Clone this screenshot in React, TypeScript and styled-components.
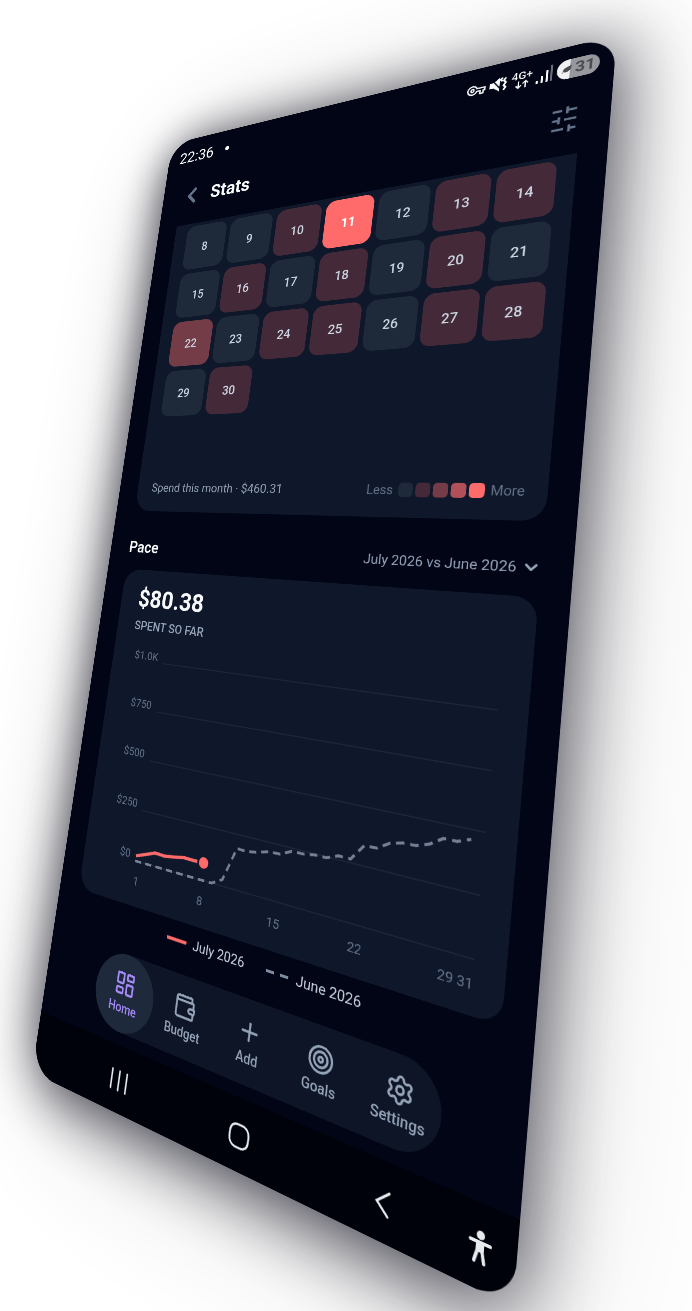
import React from 'react';
import styled, { createGlobalStyle } from 'styled-components';
import {
  ChevronDown,
  ChevronLeft,
  LayoutDashboard,
  Plus,
  Settings,
  Target,
  Wallet,
} from 'lucide-react';
import { MdOutlineVpnKey } from 'react-icons/md';

/* ---------- device geometry ---------- */

const SCREEN = { width: 768, height: 1664 };

type Point = [number, number];

/* Corners of the tilted device, measured from the device's own top centre. */
const CORNERS: Point[] = [
  [-174, 144],
  [271, 35],
  [167, 1307],
  [-314, 1072],
];

/* Projects the flat screen onto the four corners (TL, TR, BR, BL). */
function project(corners: Point[], w: number, h: number): string {
  const [[x0, y0], [x1, y1], [x2, y2], [x3, y3]] = corners.map(
    ([x, y]): Point => [x + w / 2, y],
  );
  const dx1 = x1 - x2;
  const dx2 = x3 - x2;
  const sx = x0 - x1 + x2 - x3;
  const dy1 = y1 - y2;
  const dy2 = y3 - y2;
  const sy = y0 - y1 + y2 - y3;
  const det = dx1 * dy2 - dx2 * dy1;
  const g = (sx * dy2 - dx2 * sy) / det;
  const k = (dx1 * sy - sx * dy1) / det;
  const m = [
    (x1 - x0 + g * x1) / w, (y1 - y0 + g * y1) / w, 0, g / w,
    (x3 - x0 + k * x3) / h, (y3 - y0 + k * y3) / h, 0, k / h,
    0, 0, 1, 0,
    x0, y0, 0, 1,
  ];
  return `matrix3d(${m.map((n) => n.toFixed(9)).join(',')})`;
}

/* ---------- palette ---------- */

const color = {
  page: '#020515',
  card: '#0f172a',
  cell: '#1e293b',
  coral: '#ff6b6b',
  text: '#f8fafc',
  soft: '#cbd5e1',
  muted: '#94a3b8',
  dim: '#64748b',
  violet: '#a78bfa',
};

const heat = ['#1e293a', '#442a39', '#743c47', '#b25059', '#ff6b6b'];

/* ---------- styled parts ---------- */

const GlobalStyle = createGlobalStyle`
  * { box-sizing: border-box; }
  body {
    margin: 0;
    background: #fff;
    font-family: Roboto, "Liberation Sans", sans-serif;
  }
  button {
    margin: 0;
    padding: 0;
    border: 0;
    background: none;
    color: inherit;
    font: inherit;
    cursor: pointer;
  }
  h1, h2, p, ol, ul { margin: 0; padding: 0; list-style: none; }
`;

const Stage = styled.main`
  display: flex;
  justify-content: center;
  align-items: flex-start;
  min-height: 100vh;
  overflow: hidden;
`;

const Phone = styled.div`
  flex: none;
  display: flex;
  flex-direction: column;
  width: ${SCREEN.width}px;
  height: ${SCREEN.height}px;
  margin-bottom: -360px;
  border-radius: 48px;
  background: ${color.page};
  color: ${color.text};
  transform: ${project(CORNERS, SCREEN.width, SCREEN.height)};
  transform-origin: 0 0;
  box-shadow: 0 12px 100px rgba(8, 8, 22, 0.8), 0 12px 220px rgba(8, 8, 18, 0.2);
`;

const StatusBar = styled.div`
  display: flex;
  align-items: center;
  height: 72px;
  padding: 0 20px 0 24px;
  font-size: 30px;
`;

const NoticeDot = styled.span`
  width: 8px;
  height: 8px;
  margin-left: 24px;
  border-radius: 50%;
  background: #fff;
`;

const StatusIcons = styled.div`
  display: flex;
  align-items: center;
  gap: 5px;
  margin-left: auto;
`;

const Network = styled.span`
  display: flex;
  flex-direction: column;
  align-items: center;
  font-size: 17px;
  font-weight: 500;
  line-height: 15px;
`;

const Battery = styled.span`
  display: flex;
  align-items: center;
  justify-content: center;
  gap: 4px;
  width: 58px;
  height: 31px;
  border-radius: 16px;
  background: linear-gradient(90deg, #f1f1f3 31%, #97989e 31%);
  color: #4a4b51;
  font-size: 24px;
  font-weight: 700;
`;

const Header = styled.header`
  display: flex;
  align-items: center;
  height: 102px;
  padding: 0 40px 12px;
  color: ${color.dim};
`;

const Title = styled.h1`
  margin: 0 auto 0 16px;
  color: ${color.text};
  font-size: 35px;
  font-weight: 700;
`;

const IconButton = styled.button`
  display: flex;
`;

const CalendarCard = styled.section`
  margin: 0 40px;
  padding: 6px 26px 28px;
  border-radius: 0 0 32px 32px;
  background: ${color.card};
`;

const MonthGrid = styled.ol`
  display: grid;
  grid-template-columns: repeat(7, 1fr);
  grid-template-rows: repeat(5, 84px);
  gap: 8px;
`;

const Day = styled.li<{ $level: number }>`
  display: flex;
  align-items: center;
  justify-content: center;
  border-radius: 16px;
  background: ${({ $level }) => heat[$level]};
  color: ${({ $level }) => ($level === 4 ? '#fff' : color.soft)};
  font-size: 22px;
  font-weight: ${({ $level }) => ($level === 4 ? 700 : 500)};
`;

const CardFooter = styled.div`
  display: flex;
  align-items: center;
  justify-content: space-between;
  height: 28px;
  margin-top: 24px;
  padding: 0 4px;
  color: ${color.muted};
  font-size: 21px;
`;

const Scale = styled.div`
  display: flex;
  align-items: center;
  gap: 4px;
  color: ${color.dim};
  font-size: 20px;
`;

const ScaleLabel = styled.span`
  margin: 0 4px;

  &:last-child { margin-right: 0; }
`;

const Swatch = styled.span<{ $level: number }>`
  width: 22px;
  height: 22px;
  border-radius: 6px;
  background: ${({ $level }) => heat[$level]};
`;

const SectionHead = styled.div`
  display: flex;
  align-items: center;
  justify-content: space-between;
  height: 40px;
  margin: 44px 40px 20px;
`;

const SectionTitle = styled.h2`
  font-size: 28px;
  font-weight: 600;
`;

const RangeButton = styled.button`
  display: flex;
  align-items: center;
  gap: 6px;
  color: ${color.muted};
  font-size: 21px;
`;

const PaceCard = styled.section`
  margin: 0 40px;
  padding: 24px 36px 20px;
  border-radius: 32px;
  background: ${color.card};
`;

const Amount = styled.p`
  font-size: 42px;
  font-weight: 700;
  line-height: 52px;
`;

const Caption = styled.p`
  margin: 8px 0 16px;
  color: ${color.muted};
  font-size: 21px;
  font-weight: 500;
  line-height: 24px;
`;

const Chart = styled.svg`
  display: block;
  width: 100%;
  height: auto;
  overflow: visible;
`;

const AxisText = styled.text`
  fill: ${color.dim};
  font-size: 19px;
`;

const Legend = styled.ul`
  display: flex;
  justify-content: center;
  gap: 36px;
  margin: 14px 0 32px;
  color: ${color.soft};
  font-size: 21px;
  line-height: 28px;
`;

const LegendItem = styled.li`
  display: flex;
  align-items: center;
  gap: 12px;
`;

const TabBar = styled.nav`
  display: grid;
  grid-template-columns: repeat(5, 1fr);
  align-self: center;
  width: 562px;
  height: 116px;
  border-radius: 58px;
  background: #0e1527;
`;

const Tab = styled.button<{ $active?: boolean }>`
  display: flex;
  flex-direction: column;
  align-items: center;
  justify-content: center;
  gap: 4px;
  border-radius: 50%;
  background: ${({ $active }) => ($active ? color.cell : 'none')};
  color: ${({ $active }) => ($active ? color.violet : color.muted)};
  font-size: 20px;
  font-weight: 500;
  line-height: 24px;
`;

const SystemBar = styled.nav`
  display: grid;
  grid-template-columns: repeat(3, 215px) 1fr;
  align-items: center;
  justify-items: center;
  height: 96px;
  margin-top: auto;
  padding: 4px 28px 0 64px;
  border-radius: 0 0 48px 48px;
  background: #00020b;
  color: #e8eaee;
`;

/* ---------- data ---------- */

const levels: Record<number, number> = {
  10: 1, 11: 4, 13: 1, 14: 1, 16: 1, 18: 1, 20: 1,
  22: 2, 24: 1, 25: 1, 27: 1, 28: 1, 30: 1,
};

const days = Array.from({ length: 23 }, (_, i) => i + 8);

const july = [25, 44, 64, 62, 70, 80, 79, 80.38];

const june = [
  0, 0, 0, 0, 0, 0, 0, 0, 0, 29, 186, 184, 194, 209, 211, 236, 237, 245, 246,
  267, 266, 336, 338, 371, 384, 386, 404, 440, 440, 460.31,
];

const plot = { left: 69, right: 612, top: 31, bottom: 351 };

const px = (day: number) =>
  plot.left + ((day - 1) * (plot.right - plot.left)) / 30;
const py = (value: number) =>
  plot.bottom - (value * (plot.bottom - plot.top)) / 1000;
const line = (values: number[]) =>
  values.map((v, i) => `${px(i + 1).toFixed(1)},${py(v).toFixed(1)}`).join(' ');

const yTicks: [number, string][] = [
  [1000, '$1.0K'],
  [750, '$750'],
  [500, '$500'],
  [250, '$250'],
  [0, '$0'],
];

const tabs = [
  { label: 'Home', Icon: LayoutDashboard },
  { label: 'Budget', Icon: Wallet },
  { label: 'Add', Icon: Plus },
  { label: 'Goals', Icon: Target },
  { label: 'Settings', Icon: Settings },
];

/* ---------- drawings ---------- */

const MutedVibrate = () => (
  <svg width="28" height="28" viewBox="0 0 28 28" aria-hidden="true">
    <path d="M1 9h6l9-7v23l-9-7H1z" fill="currentColor" />
    <path d="M1 0l18 23" stroke={color.page} strokeWidth="2" />
    <path
      d="M20 3l-3 3 3 3M25 4l-3 4 3 4-3 4 3 4-3 4"
      fill="none"
      stroke="currentColor"
      strokeWidth="3"
    />
  </svg>
);

const DataArrows = () => (
  <svg width="24" height="14" viewBox="0 0 24 14" aria-hidden="true">
    <path
      d="M7 1v11M3 8l4 4 4-4M17 13V2M13 6l4-4 4 4"
      fill="none"
      stroke="currentColor"
      strokeWidth="2"
    />
  </svg>
);

const Signal = () => (
  <svg width="24" height="28" viewBox="0 0 24 28" aria-hidden="true">
    <path d="M0 22h3v5H0zM7 16h3v11H7zM14 8h3v19h-3z" fill="currentColor" />
    <path d="M20 1h3v26h-3z" fill="#6b6d78" />
  </svg>
);

const Leaf = () => (
  <svg width="15" height="15" viewBox="0 0 18 18" aria-hidden="true">
    <path
      d="M1 15c2-1 2-2 2-4 0-5 6-6 14-9-1 9-4 12-9 12-1 0-3 0-4-1l-2 3z"
      fill="currentColor"
    />
  </svg>
);

const Sliders = () => (
  <svg
    width="44"
    height="44"
    viewBox="0 0 24 24"
    fill="none"
    stroke="currentColor"
    strokeWidth="2"
    aria-hidden="true"
  >
    <path d="M21 4h-7M10 4H3M21 12h-9M8 12H3M21 20h-5M12 20H3M14 1v6M8 9v6M16 17v6" />
  </svg>
);

const Recents = () => (
  <svg width="36" height="36" viewBox="0 0 36 36" stroke="currentColor" strokeWidth="3" strokeLinecap="round" aria-hidden="true">
    <path d="M4 4v28M18 4v28M32 4v28" />
  </svg>
);

const HomeKey = () => (
  <svg width="36" height="36" viewBox="0 0 36 36" fill="none" stroke="currentColor" strokeWidth="3" aria-hidden="true">
    <rect x="3" y="3" width="30" height="30" rx="11" />
  </svg>
);

const BackKey = () => (
  <svg width="36" height="36" viewBox="0 0 36 36" fill="none" stroke="currentColor" strokeWidth="3" strokeLinecap="round" aria-hidden="true">
    <path d="M25 4L9 18l16 14" />
  </svg>
);

const Person = () => (
  <svg width="28" height="40" viewBox="4 0 28 40" fill="none" stroke="currentColor" strokeLinecap="round" strokeLinejoin="round" aria-hidden="true">
    <circle cx="18" cy="6" r="5" fill="currentColor" stroke="none" />
    <path d="M6 14h24" strokeWidth="4" />
    <path d="M13 14h10v11H13z" fill="currentColor" stroke="none" />
    <path d="M15 24l-3 12M21 24l3 12" strokeWidth="4" />
  </svg>
);

/* ---------- screen ---------- */

export default function App() {
  return (
    <>
      <GlobalStyle />
      <Stage>
        <Phone>
          <StatusBar>
            <time>22:36</time>
            <NoticeDot />
            <StatusIcons>
              <MdOutlineVpnKey size={28} />
              <MutedVibrate />
              <Network>
                4G+
                <DataArrows />
              </Network>
              <Signal />
              <Battery>
                <Leaf />
                31
              </Battery>
            </StatusIcons>
          </StatusBar>

          <Header>
            <IconButton aria-label="Back">
              <ChevronLeft size={48} strokeWidth={3} />
            </IconButton>
            <Title>Stats</Title>
            <IconButton aria-label="Filters">
              <Sliders />
            </IconButton>
          </Header>

          <CalendarCard aria-label="Daily spend">
            <MonthGrid>
              {days.map((day) => (
                <Day key={day} $level={levels[day] ?? 0}>
                  {day}
                </Day>
              ))}
            </MonthGrid>
            <CardFooter>
              <span>Spend this month · $460.31</span>
              <Scale>
                <ScaleLabel>Less</ScaleLabel>
                {heat.map((_, level) => (
                  <Swatch key={level} $level={level} />
                ))}
                <ScaleLabel>More</ScaleLabel>
              </Scale>
            </CardFooter>
          </CalendarCard>

          <SectionHead>
            <SectionTitle>Pace</SectionTitle>
            <RangeButton>
              July 2026 vs June 2026
              <ChevronDown size={26} strokeWidth={3} />
            </RangeButton>
          </SectionHead>

          <PaceCard>
            <Amount>$80.38</Amount>
            <Caption>SPENT SO FAR</Caption>
            <Chart viewBox="0 0 616 400" role="img" aria-label="Cumulative spend">
              {yTicks.map(([value, label]) => (
                <g key={label}>
                  <line
                    x1={plot.left}
                    x2={plot.right}
                    y1={py(value)}
                    y2={py(value)}
                    stroke="#1b2536"
                    strokeWidth="2"
                  />
                  <AxisText x="58" y={py(value) - 3} textAnchor="end">
                    {label}
                  </AxisText>
                </g>
              ))}
              {[1, 8, 15, 22, 29, 31].map((day) => (
                <AxisText
                  key={day}
                  x={px(day) + 1}
                  y="388"
                  textAnchor={day === 1 ? 'start' : day === 31 ? 'end' : 'middle'}
                >
                  {day}
                </AxisText>
              ))}
              <polyline
                points={line(june)}
                fill="none"
                stroke="#758096"
                strokeWidth="4"
                strokeDasharray="12 8"
              />
              <polyline
                points={line(july)}
                fill="none"
                stroke={color.coral}
                strokeWidth="5"
                strokeLinejoin="round"
              />
              <circle
                cx={px(8)}
                cy={py(80.38)}
                r="10"
                fill={color.coral}
                stroke={color.card}
                strokeWidth="3"
              />
            </Chart>
          </PaceCard>

          <Legend>
            <LegendItem>
              <svg width="36" height="6" aria-hidden="true">
                <path d="M0 3h36" stroke={color.coral} strokeWidth="5" />
              </svg>
              July 2026
            </LegendItem>
            <LegendItem>
              <svg width="36" height="6" aria-hidden="true">
                <path d="M0 3h36" stroke="#7f8ba0" strokeWidth="4" strokeDasharray="13 10" />
              </svg>
              June 2026
            </LegendItem>
          </Legend>

          <TabBar>
            {tabs.map(({ label, Icon }, i) => (
              <Tab key={label} $active={i === 0}>
                <Icon size={40} />
                {label}
              </Tab>
            ))}
          </TabBar>

          <SystemBar>
            <IconButton aria-label="Recent apps">
              <Recents />
            </IconButton>
            <IconButton aria-label="Home screen">
              <HomeKey />
            </IconButton>
            <IconButton aria-label="Go back">
              <BackKey />
            </IconButton>
            <IconButton aria-label="Accessibility">
              <Person />
            </IconButton>
          </SystemBar>
        </Phone>
      </Stage>
    </>
  );
}
